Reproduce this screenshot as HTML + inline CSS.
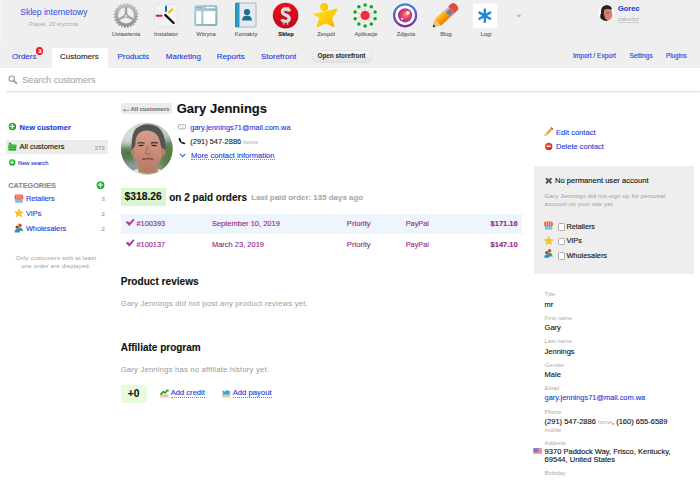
<!DOCTYPE html>
<html><head><meta charset="utf-8">
<style>
html,body{margin:0;padding:0;}
body{width:700px;height:487px;overflow:hidden;background:#fff;position:relative;font-family:"Liberation Sans",sans-serif;color:#000;}
.t{position:absolute;white-space:nowrap;line-height:1;-webkit-text-stroke:0.12px currentColor;}
.a{color:#2340dc;}
.g{color:#9a9a9a;}
.b{font-weight:bold;}
.abs{position:absolute;}
#hdr{position:absolute;left:0;top:0;width:700px;height:68px;background:#efefef;}
.il{position:absolute;top:30.5px;font-size:5.8px;color:#666;line-height:6px;white-space:nowrap;text-align:center;width:50px;-webkit-text-stroke:0.1px #666;}
</style></head><body>
<div id="hdr"></div>
<div class="abs" style="left:0;top:0;width:1px;height:43px;background:#f5f5f5;"></div>
<svg class="abs" style="left:0;top:0;" width="700" height="40" viewBox="0 0 700 40">
<defs>
<linearGradient id="ggear" x1="0" y1="0" x2="0" y2="1"><stop offset="0" stop-color="#c4c4c4"/><stop offset="1" stop-color="#8e8e8e"/></linearGradient>
<linearGradient id="gred" x1="0" y1="0" x2="0" y2="1"><stop offset="0" stop-color="#ec0e16"/><stop offset="1" stop-color="#bf0a1c"/></linearGradient>
<linearGradient id="gstar" x1="0" y1="0" x2="1" y2="1"><stop offset="0" stop-color="#ffe030"/><stop offset="0.6" stop-color="#ffc800"/><stop offset="1" stop-color="#ffa400"/></linearGradient>
<linearGradient id="gring" x1="0" y1="0" x2="0" y2="1"><stop offset="0" stop-color="#3a88e2"/><stop offset="1" stop-color="#7b2f90"/></linearGradient>
<radialGradient id="glens" cx="0.55" cy="0.45" r="0.6"><stop offset="0" stop-color="#ffa82a"/><stop offset="0.45" stop-color="#f03c78"/><stop offset="1" stop-color="#8a2c96"/></radialGradient>
<linearGradient id="gwit" x1="0" y1="0" x2="1" y2="1"><stop offset="0" stop-color="#b2d4de"/><stop offset="1" stop-color="#86aab6"/></linearGradient>
<linearGradient id="gspine" x1="0" y1="0" x2="1" y2="0"><stop offset="0" stop-color="#0c7aa6"/><stop offset="0.5" stop-color="#28a8d2"/><stop offset="1" stop-color="#1486b2"/></linearGradient>
<linearGradient id="gorange" x1="0" y1="0" x2="0" y2="1"><stop offset="0" stop-color="#ffc640"/><stop offset="0.5" stop-color="#ff9e00"/><stop offset="1" stop-color="#e87800"/></linearGradient>
<linearGradient id="gferr" x1="0" y1="0" x2="0" y2="1"><stop offset="0" stop-color="#d8d8d8"/><stop offset="0.5" stop-color="#707070"/><stop offset="1" stop-color="#9a9a9a"/></linearGradient>
</defs>
<!-- gear -->
<g transform="translate(126,15.4)">
<path fill="url(#ggear)" d="M11.00,0.00 L12.58,0.73 L12.48,1.71 L10.79,2.12 L10.63,2.85 L11.96,3.96 L11.62,4.88 L9.88,4.84 L9.53,5.50 L10.53,6.92 L9.96,7.72 L8.29,7.23 L7.78,7.78 L8.38,9.41 L7.62,10.04 L6.14,9.13 L5.50,9.53 L5.66,11.26 L4.76,11.67 L3.56,10.41 L2.85,10.63 L2.56,12.34 L1.58,12.50 L0.75,10.97 L0.00,11.00 L-0.73,12.58 L-1.71,12.48 L-2.12,10.79 L-2.85,10.63 L-3.96,11.96 L-4.88,11.62 L-4.84,9.88 L-5.50,9.53 L-6.92,10.53 L-7.72,9.96 L-7.23,8.29 L-7.78,7.78 L-9.41,8.38 L-10.04,7.62 L-9.13,6.14 L-9.53,5.50 L-11.26,5.66 L-11.67,4.76 L-10.41,3.56 L-10.63,2.85 L-12.34,2.56 L-12.50,1.58 L-10.97,0.75 L-11.00,0.00 L-12.58,-0.73 L-12.48,-1.71 L-10.79,-2.12 L-10.63,-2.85 L-11.96,-3.96 L-11.62,-4.88 L-9.88,-4.84 L-9.53,-5.50 L-10.53,-6.92 L-9.96,-7.72 L-8.29,-7.23 L-7.78,-7.78 L-8.38,-9.41 L-7.62,-10.04 L-6.14,-9.13 L-5.50,-9.53 L-5.66,-11.26 L-4.76,-11.67 L-3.56,-10.41 L-2.85,-10.63 L-2.56,-12.34 L-1.58,-12.50 L-0.75,-10.97 L-0.00,-11.00 L0.73,-12.58 L1.71,-12.48 L2.12,-10.79 L2.85,-10.63 L3.96,-11.96 L4.88,-11.62 L4.84,-9.88 L5.50,-9.53 L6.92,-10.53 L7.72,-9.96 L7.23,-8.29 L7.78,-7.78 L9.41,-8.38 L10.04,-7.62 L9.13,-6.14 L9.53,-5.50 L11.26,-5.66 L11.67,-4.76 L10.41,-3.56 L10.63,-2.85 L12.34,-2.56 L12.50,-1.58 L10.97,-0.75Z"/>
<circle r="8" fill="#efefef"/>
<g stroke="#a6a6a6" stroke-width="2.4" stroke-linecap="butt">
<line x1="0" y1="0" x2="0" y2="-8.5"/>
<line x1="0" y1="0" x2="7.6" y2="4.4"/>
<line x1="0" y1="0" x2="-7.6" y2="4.4"/>
</g>
<path d="M0,-4.2 L3.8,2.4 L-3.8,2.4Z" fill="#a6a6a6"/>
<circle cx="0" cy="0.6" r="1.1" fill="#efefef"/>
</g>
<!-- instalator -->
<rect x="154.5" y="4.3" width="22.8" height="22.6" rx="4" fill="#f3f3f3" stroke="#dedede" stroke-width="0.7"/>
<g stroke-linecap="round" stroke-width="2">
<line x1="166" y1="6.4" x2="166" y2="11" stroke="#2860c0"/>
<line x1="172.4" y1="9.3" x2="168.8" y2="12.5" stroke="#f5c000"/>
<line x1="156.6" y1="15.7" x2="161.6" y2="15.7" stroke="#e8141c"/>
<line x1="159" y1="9.9" x2="162.2" y2="12.7" stroke="#dcdcdc" stroke-width="2.4"/>
<line x1="159.3" y1="22.2" x2="162.5" y2="19.4" stroke="#dcdcdc" stroke-width="2.4"/>
<line x1="159" y1="9.7" x2="162.2" y2="12.5" stroke="#ffffff" stroke-width="1.6"/>
<line x1="159.3" y1="22" x2="162.5" y2="19.2" stroke="#ffffff" stroke-width="1.6"/>
<line x1="165.2" y1="14.9" x2="173.6" y2="23" stroke="#111" stroke-width="2.2"/>
</g>
<!-- witryna -->
<rect x="194.2" y="5" width="23.2" height="20.9" rx="2.2" fill="url(#gwit)"/>
<rect x="196.2" y="11.1" width="5.2" height="12.9" fill="#fff"/>
<rect x="203.3" y="11.1" width="12" height="12.9" fill="#fff"/>
<rect x="206" y="7.1" width="9" height="1.1" fill="#fff"/>
<g fill="#6e8c96"><rect x="196.2" y="7.2" width="1.4" height="1"/><rect x="198.3" y="7.2" width="1.4" height="1"/><rect x="200.4" y="7.2" width="1.4" height="1"/></g>
<!-- kontakty -->
<rect x="235.6" y="3" width="20.4" height="24" rx="1" fill="#e3ebef" stroke="#9aa6ae" stroke-width="0.8"/>
<rect x="235.2" y="2.8" width="4.2" height="24.4" fill="url(#gspine)"/>
<circle cx="247" cy="12" r="3.1" fill="#1e6d92"/>
<path d="M242,20.4 Q242.2,15.6 247,15.4 Q251.8,15.6 252,20.4Z" fill="#1e6d92"/>
<!-- sklep -->
<circle cx="285.6" cy="15.6" r="12.8" fill="url(#gred)"/>
<path d="M289.4,11.4 Q288.8,9 285.8,9 Q282.4,9.1 282.4,11.8 Q282.5,14.2 285.8,15.1 Q289.2,16 289.2,18.8 Q289,21.4 285.6,21.4 Q282.6,21.4 281.8,19.2" fill="none" stroke="#d8dcdc" stroke-width="3.3" stroke-linecap="butt"/>
<path d="M284,6.6 L286.2,8.2 L288.6,6.8 L289.2,8.6 L290.8,9.2 L289.8,11.4 L285.4,9.6Z" fill="#d8dcdc"/>
<circle cx="283.8" cy="23.8" r="0.85" fill="#d8dcdc"/>
<circle cx="287.6" cy="23.8" r="0.85" fill="#d8dcdc"/>
<!-- zespol -->
<circle cx="324.2" cy="7.1" r="4" fill="#ffcc00"/>
<path d="M313.6,13.8 Q320,12.6 326,11.2 Q332,9.4 336.8,8.4 Q338.2,8.6 337.4,10 L332,18.4 L334.6,26 Q334.6,27.4 333.2,27 L325.8,23.2 L317.8,27 Q316.2,27.4 316.6,26 L319.4,18 L313.4,14.6 Q313,14 313.6,13.8Z" fill="url(#gstar)"/>
<!-- aplikacje -->
<g fill="#0aa81a">
<circle cx="365.1" cy="4.9" r="1.75"/><circle cx="371.3" cy="6.8" r="1.75"/><circle cx="375.1" cy="12" r="1.75"/><circle cx="375.1" cy="18.8" r="1.75"/><circle cx="371.3" cy="24" r="1.75"/>
<circle cx="365.1" cy="26.1" r="1.75"/><circle cx="358.9" cy="24" r="1.75"/><circle cx="355.1" cy="18.8" r="1.75"/><circle cx="355.1" cy="12" r="1.75"/><circle cx="358.9" cy="6.8" r="1.75"/>
</g>
<g stroke="#ababab" stroke-width="0.7">
<line x1="365.1" y1="8.2" x2="365.1" y2="9.8"/><line x1="369.3" y1="9.6" x2="368.3" y2="10.9"/><line x1="371.9" y1="13.2" x2="370.4" y2="13.7"/><line x1="371.9" y1="17.6" x2="370.4" y2="17.1"/><line x1="369.3" y1="21.2" x2="368.3" y2="19.9"/>
<line x1="365.1" y1="22.6" x2="365.1" y2="21"/><line x1="360.9" y1="21.2" x2="361.9" y2="19.9"/><line x1="358.3" y1="17.6" x2="359.8" y2="17.1"/><line x1="358.3" y1="13.2" x2="359.8" y2="13.7"/><line x1="360.9" y1="9.6" x2="361.9" y2="10.9"/>
</g>
<circle cx="365.1" cy="15.4" r="4.6" fill="#ee3038"/>
<!-- zdjecia -->
<circle cx="405.1" cy="15.3" r="11" fill="#fff" stroke="url(#gring)" stroke-width="2.2"/>
<circle cx="405.1" cy="15.3" r="7.1" fill="url(#glens)"/>
<circle cx="407.9" cy="12.9" r="1.8" fill="#fff"/>
<circle cx="402" cy="18.8" r="0.95" fill="#fff"/>
<!-- blog pencil -->
<g transform="translate(444.8,16) rotate(-43)">
<path d="M-16.6,0 L-9.5,-4.6 L-9.5,4.6Z" fill="#e8c090"/>
<path d="M-16.6,0 L-14,-1.7 L-14,1.7Z" fill="#2a3440"/>
<rect x="-9.5" y="-4.6" width="12.5" height="9.2" fill="url(#gorange)"/>
<rect x="3" y="-4.6" width="6" height="9.2" fill="url(#gferr)"/>
<path d="M9,-4.6 L12.5,-4.6 Q16.2,-4.6 16.2,0 Q16.2,4.6 12.5,4.6 L9,4.6Z" fill="#e84840"/>
</g>
<!-- logi -->
<rect x="473" y="3.5" width="24" height="24.8" rx="2.5" fill="#fff"/>
<g stroke="#1d8ad8" stroke-width="2.4" stroke-linecap="butt">
<line x1="484.8" y1="8.6" x2="484.8" y2="22.8"/>
<line x1="478.6" y1="12.1" x2="491" y2="19.3"/>
<line x1="478.6" y1="19.3" x2="491" y2="12.1"/>
</g>
<!-- dropdown -->
<path d="M516.2,14.8 L521.4,14.8 L518.8,17.6Z" fill="#b8b8b8"/>
</svg>


<!-- header brand -->
<div class="t a" style="left:20.3px;top:7.8px;font-size:8.5px;color:#3656dc;-webkit-text-stroke:0.05px #3656dc;">Sklep internetowy</div>
<div class="t g" style="left:29px;top:22.4px;font-size:5.9px;color:#aaa;-webkit-text-stroke:0;">Piątek, 20 stycznia</div>

<!-- app labels -->
<div class="il" style="left:101px;">Ustawienia</div>
<div class="il" style="left:141px;">Instalator</div>
<div class="il" style="left:181px;">Witryna</div>
<div class="il" style="left:221px;">Kontakty</div>
<div class="il" style="left:261px;font-weight:bold;color:#222;-webkit-text-stroke:0.15px #222;">Sklep</div>
<div class="il" style="left:301px;">Zespół</div>
<div class="il" style="left:341px;">Aplikacje</div>
<div class="il" style="left:381px;">Zdjęcia</div>
<div class="il" style="left:421px;">Blog</div>
<div class="il" style="left:461px;">Logi</div>

<!-- user -->
<div class="t a b" style="left:618px;top:4.5px;font-size:7.4px;">Gorec</div>
<div class="t g" style="left:618px;top:16.8px;font-size:5.8px;color:#aaa;-webkit-text-stroke:0;text-decoration:underline;text-decoration-color:#ccc;">zakończ</div>

<!-- tabs -->
<div class="abs" style="left:52px;top:47.5px;width:56px;height:21px;background:#fff;"></div>
<div class="t a" style="left:12px;top:53px;font-size:8px;">Orders</div>
<div class="abs" style="left:36.4px;top:47px;width:6.9px;height:7.9px;border-radius:50%;background:#ee1018;"></div>
<div class="t b" style="left:36.4px;top:48.3px;width:6.9px;text-align:center;font-size:6px;color:#fff;">3</div>
<div class="t" style="left:60px;top:53px;font-size:8px;color:#222;">Customers</div>
<div class="t a" style="left:117.5px;top:53px;font-size:8px;">Products</div>
<div class="t a" style="left:165.8px;top:53px;font-size:8px;">Marketing</div>
<div class="t a" style="left:216.8px;top:53px;font-size:8px;">Reports</div>
<div class="t a" style="left:261px;top:53px;font-size:8px;">Storefront</div>
<div class="abs" style="left:311.5px;top:51px;width:60px;height:11px;border-radius:6px;background:linear-gradient(#f8f8f8,#e2e2e2);box-shadow:0 0 0 0.5px #d8d8d8,0 0.5px 1px rgba(0,0,0,0.08);"></div>
<div class="t b" style="left:317.5px;top:53.3px;font-size:6.35px;color:#333;-webkit-text-stroke:0.1px #333;">Open storefront</div>
<div class="t a" style="left:573px;top:53.2px;font-size:6.55px;">Import / Export</div>
<div class="t a" style="left:629.4px;top:53.2px;font-size:6.45px;">Settings</div>
<div class="t a" style="left:666px;top:53.2px;font-size:6.3px;">Plugins</div>

<!-- search -->
<div class="t" style="left:22.3px;top:75.9px;font-size:9.1px;color:#aaa;">Search customers</div>
<div class="abs" style="left:5.5px;top:91px;width:695px;height:1px;background:#e2e2e2;box-shadow:0 1px 2px rgba(0,0,0,0.05);"></div>

<!-- sidebar -->
<div class="t a b" style="left:19.6px;top:123.5px;font-size:7.5px;">New customer</div>
<div class="abs" style="left:6px;top:140px;width:101.6px;height:13.5px;background:#ececec;"></div>
<div class="t" style="left:19.6px;top:143px;font-size:7.47px;color:#111;">All customers</div>
<div class="t g" style="left:94.8px;top:144.5px;font-size:6px;">272</div>
<div class="t a" style="left:18px;top:160.8px;font-size:5.75px;">New search</div>
<div class="t b" style="left:8.2px;top:181.6px;font-size:7.3px;color:#8a8a8a;">CATEGORIES</div>
<div class="t a" style="left:25.9px;top:195px;font-size:7.3px;">Retailers</div>
<div class="t g" style="left:101.5px;top:195.8px;font-size:6px;">3</div>
<div class="t a" style="left:25.9px;top:210px;font-size:7.3px;">VIPs</div>
<div class="t g" style="left:101.5px;top:210.8px;font-size:6px;">2</div>
<div class="t a" style="left:25.9px;top:225px;font-size:7.35px;">Wholesalers</div>
<div class="t g" style="left:101.5px;top:225.8px;font-size:6px;">2</div>
<div class="t g" style="left:0;width:112px;text-align:center;top:253.5px;font-size:6px;letter-spacing:0.2px;line-height:8.6px;white-space:normal;color:#9c9c9c;-webkit-text-stroke:0;">Only customers with at least<br>one order are displayed.</div>

<!-- main header -->
<div class="abs" style="left:120.7px;top:103px;width:51.3px;height:11.4px;border-radius:2px;background:#ececec;"></div>
<div class="t b" style="left:130.5px;top:106.8px;font-size:5.9px;color:#777;">All customers</div>
<svg class="abs" style="left:122px;top:107px;" width="9" height="6" viewBox="0 0 9 6"><path d="M1.4,3.2 H7.2 M1.4,3.2 L3,2 M1.4,3.2 L3,4.4" stroke="#888" stroke-width="0.8" fill="none"/></svg>
<div class="t b" style="left:176.7px;top:101.5px;font-size:13px;color:#111;">Gary Jennings</div>
<div class="t a" style="left:190.3px;top:123.6px;font-size:7.4px;">gary.jennings71@mail.com.wa</div>
<div class="t" style="left:190.3px;top:137.6px;font-size:7.45px;color:#222;">(291) 547-2886 <span style="font-size:5.8px;letter-spacing:0.15px;color:#a8a8a8;-webkit-text-stroke:0;">home</span></div>
<div class="t a" style="left:191px;top:151.5px;font-size:7.6px;line-height:0.98;border-bottom:0.8px dotted #6a80e8;">More contact information</div>

<!-- orders -->
<div class="abs" style="left:120.7px;top:188px;width:45.7px;height:17.6px;background:#d9f7cf;"></div>
<div class="t b" style="left:124.6px;top:192.3px;font-size:10.3px;color:#111;">$318.26</div>
<div class="t b" style="left:169.2px;top:192.6px;font-size:10px;color:#111;">on 2 paid orders</div>
<div class="t b" style="left:251.3px;top:194px;font-size:7.93px;color:#ababab;">Last paid order: 135 days ago</div>
<div class="abs" style="left:120.7px;top:213.8px;width:401.7px;height:20.2px;background:#eef5fd;"></div>
<div class="t" style="left:136.5px;top:220px;font-size:7.35px;color:#99288e;">#100393</div>
<div class="t" style="left:211.9px;top:220px;font-size:7.5px;color:#99288e;">September 10, 2019</div>
<div class="t" style="left:346.8px;top:220px;font-size:7.7px;color:#99288e;">Priority</div>
<div class="t" style="left:405.7px;top:220px;font-size:7.36px;color:#99288e;">PayPal</div>
<div class="t b" style="left:490.6px;top:220px;font-size:7.5px;color:#99288e;">$171.16</div>
<div class="t" style="left:136.5px;top:240.5px;font-size:7.35px;color:#99288e;">#100137</div>
<div class="t" style="left:211.9px;top:240.5px;font-size:7.5px;color:#99288e;">March 23, 2019</div>
<div class="t" style="left:346.8px;top:240.5px;font-size:7.7px;color:#99288e;">Priority</div>
<div class="t" style="left:405.7px;top:240.5px;font-size:7.36px;color:#99288e;">PayPal</div>
<div class="t b" style="left:490.6px;top:240.5px;font-size:7.5px;color:#99288e;">$147.10</div>

<!-- reviews -->
<div class="t b" style="left:120.7px;top:277px;font-size:10.1px;color:#111;">Product reviews</div>
<div class="t g" style="left:120.7px;top:299.7px;font-size:7.7px;letter-spacing:0.21px;color:#9a9a9a;-webkit-text-stroke:0;">Gary Jennings did not post any product reviews yet.</div>
<div class="t b" style="left:120.7px;top:343px;font-size:10px;color:#111;">Affiliate program</div>
<div class="t g" style="left:120.7px;top:365.5px;font-size:7.7px;letter-spacing:0.185px;color:#9a9a9a;-webkit-text-stroke:0;">Gary Jennings has no affiliate history yet.</div>
<div class="abs" style="left:120.5px;top:385.1px;width:26.5px;height:17.7px;background:#e6fcdc;"></div>
<div class="t b" style="left:127.8px;top:389px;font-size:10.2px;color:#111;">+0</div>
<div class="t a" style="left:170.7px;top:390.2px;font-size:7.6px;line-height:0.9;border-bottom:0.8px dotted #6a80e8;">Add credit</div>
<div class="t a" style="left:232.7px;top:390.2px;font-size:7.7px;line-height:0.9;border-bottom:0.8px dotted #6a80e8;">Add payout</div>

<!-- right column -->
<div class="t a" style="left:556px;top:128.8px;font-size:7.57px;">Edit contact</div>
<div class="t a" style="left:556px;top:143.2px;font-size:7.5px;">Delete contact</div>
<div class="abs" style="left:533.6px;top:165.7px;width:160.8px;height:108px;background:#eeeeee;"></div>
<div class="t" style="left:555px;top:177.1px;font-size:7.58px;color:#111;">No permanent user account</div>
<div class="t g" style="left:544.6px;top:192px;font-size:6.1px;letter-spacing:0.15px;line-height:8.1px;color:#9c9c9c;-webkit-text-stroke:0;">Gary Jennings did not sign up for personal<br>account on your site yet.</div>
<div class="t" style="left:566.4px;top:222.6px;font-size:7.25px;color:#111;">Retailers</div>
<div class="t" style="left:566.4px;top:237.2px;font-size:7.3px;color:#111;">VIPs</div>
<div class="t" style="left:566.4px;top:251.7px;font-size:7.4px;color:#111;">Wholesalers</div>
<div class="abs" style="left:558.4px;top:223.3px;width:5px;height:5.4px;border:0.6px solid #b0b0b0;border-radius:1.2px;background:#fff;"></div>
<div class="abs" style="left:558.4px;top:237.9px;width:5px;height:5.4px;border:0.6px solid #b0b0b0;border-radius:1.2px;background:#fff;"></div>
<div class="abs" style="left:558.4px;top:252.4px;width:5px;height:5.4px;border:0.6px solid #b0b0b0;border-radius:1.2px;background:#fff;"></div>

<div class="t" style="left:544.6px;top:292.1px;font-size:5.8px;color:#aaa;-webkit-text-stroke:0;">Title</div>
<div class="t" style="left:544.6px;top:301px;font-size:7.5px;color:#111;">mr</div>
<div class="t" style="left:544.6px;top:316.1px;font-size:5.85px;color:#aaa;-webkit-text-stroke:0;">First name</div>
<div class="t" style="left:544.6px;top:324.2px;font-size:7.5px;color:#111;">Gary</div>
<div class="t" style="left:544.6px;top:339.3px;font-size:5.85px;color:#aaa;-webkit-text-stroke:0;">Last name</div>
<div class="t" style="left:544.6px;top:347.7px;font-size:7.5px;color:#111;">Jennings</div>
<div class="t" style="left:544.6px;top:362.9px;font-size:5.85px;color:#aaa;-webkit-text-stroke:0;">Gender</div>
<div class="t" style="left:544.6px;top:370.9px;font-size:7.5px;color:#111;">Male</div>
<div class="t" style="left:544.6px;top:386.3px;font-size:5.85px;color:#aaa;-webkit-text-stroke:0;">Email</div>
<div class="t a" style="left:544.6px;top:394.3px;font-size:7.43px;">gary.jennings71@mail.com.wa</div>
<div class="t" style="left:544.6px;top:409.8px;font-size:5.85px;color:#aaa;-webkit-text-stroke:0;">Phone</div>
<div class="t" style="left:544.6px;top:418px;font-size:7.5px;color:#111;">(291) 547-2886 <span style="font-size:5.6px;color:#aaa;font-style:italic;-webkit-text-stroke:0;">home</span>, (160) 655-6589</div>
<div class="t" style="left:544.6px;top:428px;font-size:5.6px;color:#aaa;font-style:italic;-webkit-text-stroke:0;">mobile</div>
<div class="t" style="left:544.6px;top:440.8px;font-size:5.85px;color:#aaa;-webkit-text-stroke:0;">Address</div>
<div class="t" style="left:544.6px;top:448.3px;font-size:7.54px;line-height:7.5px;color:#111;">9370 Paddock Way, Frisco, Kentucky,<br>69544, United States</div>
<div class="t" style="left:544.6px;top:471.3px;font-size:5.85px;color:#aaa;-webkit-text-stroke:0;">Birthday</div>

<svg class="abs" style="left:0;top:0;" width="700" height="487" viewBox="0 0 700 487">
<defs>
<filter id="blur1" x="-50%" y="-50%" width="200%" height="200%"><feGaussianBlur stdDeviation="3"/></filter>
<filter id="blur05" x="-20%" y="-20%" width="140%" height="140%"><feGaussianBlur stdDeviation="0.5"/></filter>
<linearGradient id="gface2" x1="0" y1="0" x2="0" y2="1"><stop offset="0" stop-color="#d6a08c"/><stop offset="0.5" stop-color="#c98c78"/><stop offset="1" stop-color="#b87a68"/></linearGradient>
<clipPath id="cpav"><circle cx="146.8" cy="148.8" r="25.9"/></clipPath>
<clipPath id="cpu"><circle cx="606.6" cy="13.1" r="8"/></clipPath>
<radialGradient id="gface" cx="0.5" cy="0.45" r="0.6"><stop offset="0" stop-color="#cf9c84"/><stop offset="1" stop-color="#a86e58"/></radialGradient>
<linearGradient id="gbg" x1="0" y1="0" x2="0" y2="1"><stop offset="0" stop-color="#d0d8da"/><stop offset="0.45" stop-color="#8aa890"/><stop offset="0.7" stop-color="#4f7a48"/><stop offset="1" stop-color="#7a9888"/></linearGradient>
<radialGradient id="ggreen" cx="0.4" cy="0.35" r="0.7"><stop offset="0" stop-color="#3cd04a"/><stop offset="1" stop-color="#0c9a1c"/></radialGradient>
<radialGradient id="gredc" cx="0.4" cy="0.35" r="0.7"><stop offset="0" stop-color="#ff6040"/><stop offset="1" stop-color="#d81c10"/></radialGradient>
</defs>
<!-- user avatar -->
<circle cx="606.6" cy="13.1" r="8" fill="#fff"/>
<g clip-path="url(#cpu)" filter="url(#blur05)">
<path d="M601,14 Q600,6 606,5 Q611,4.6 612,9 L610.6,10 Q607,8.6 604.6,10.4 L604,14Z" fill="#2c2222"/>
<path d="M604.2,9.8 Q608,8 611.4,10 Q613.2,14 612,17.6 Q610.6,20.4 607.4,20.6 Q604.2,20 603.6,16Z" fill="#d88070"/>
<path d="M600.4,14 L604,14 Q604.4,18.6 607.6,20.6 L609,22 L600,22Z" fill="#2a1e1e"/>
<path d="M606,13 L609.6,12.6" stroke="#6a3030" stroke-width="0.6"/>
</g>
<!-- search magnifier -->
<circle cx="11.7" cy="78.7" r="2.7" fill="none" stroke="#999" stroke-width="1.1"/>
<line x1="13.7" y1="80.7" x2="16.6" y2="83.3" stroke="#999" stroke-width="1.7" stroke-linecap="round"/>
<!-- new customer plus -->
<circle cx="12.45" cy="126.5" r="3.7" fill="url(#ggreen)"/>
<path d="M12.45,124.3 V128.7 M10.25,126.5 H14.65" stroke="#fff" stroke-width="1.2"/>
<!-- basket -->
<path d="M9.6,142.2 L12.8,144.8 L11.6,145.8 L8.8,143.4Z" fill="#606060"/>
<rect x="8" y="144.6" width="8.6" height="2.2" rx="0.4" fill="#3cc83c"/>
<rect x="8.4" y="146.6" width="7.8" height="4" fill="#20a820"/>
<rect x="8.4" y="148.2" width="7.8" height="0.7" fill="#7ae07a"/>
<!-- new search plus -->
<circle cx="12.2" cy="162.4" r="3.1" fill="url(#ggreen)"/>
<path d="M12.2,160.6 V164.2 M10.4,162.4 H14" stroke="#fff" stroke-width="1"/>
<!-- categories plus -->
<circle cx="100.5" cy="185.1" r="3.9" fill="url(#ggreen)"/>
<path d="M100.5,182.8 V187.4 M98.2,185.1 H102.8" stroke="#fff" stroke-width="1.2"/>
<!-- sidebar cat icons -->
<g id="shop1">
<rect x="15.2" y="198.4" width="7.4" height="4.4" fill="#9ab8c4"/>
<rect x="15.8" y="199.2" width="6.2" height="3" fill="#7cc4e0"/>
<path d="M14.6,199 V196.2 Q14.6,194.6 15.8,194.6 H22 Q23.2,194.6 23.2,196.2 V199 Q22.4,199.8 21.6,199 Q20.8,199.8 20,199 Q19.2,199.8 18.4,199 Q17.6,199.8 16.8,199 Q16,199.8 15.4,199 Q15,199.6 14.6,199Z" fill="#f2603e"/>
<path d="M16.8,194.8 V198.6 M18.9,194.8 V198.6 M21,194.8 V198.6" stroke="#ffe0d0" stroke-width="0.6"/>
</g>
<path d="M18.9,208.8 L20.1,211.8 L23.2,211.9 L20.8,213.9 L21.7,217 L18.9,215.2 L16.1,217 L17,213.9 L14.6,211.9 L17.7,211.8Z" fill="#f8c820" stroke="#e0a010" stroke-width="0.4"/>
<g>
<circle cx="20" cy="225.3" r="1.7" fill="#c0502a"/>
<path d="M17.4,231 Q17.6,227.4 20,227.4 Q22.6,227.4 22.8,231Z" fill="#2aa868"/>
<circle cx="17.2" cy="227.2" r="1.6" fill="#8a4a28"/>
<path d="M14.6,232.4 Q14.8,229 17.2,229 Q19.6,229 19.8,232.4Z" fill="#2a8ad8"/>
</g>
<!-- contact icons -->
<rect x="178.4" y="124.7" width="7.2" height="4.2" rx="0.8" fill="none" stroke="#a8a8a8" stroke-width="0.9"/>
<path d="M179.8,126 L182,127.4 L184.2,126" fill="none" stroke="#c0c0c0" stroke-width="0.6"/>
<path d="M179.2,137.8 Q178.2,138.6 178.9,140.4 Q180.6,143.6 183.8,144.2 Q185.2,144.4 185.4,143.4 L183.8,142 L182.8,142.6 Q181.2,141.6 180.6,140 L181.2,139.2 Z" fill="#111"/>
<path d="M179.9,153.9 L182.6,156.6 L185.3,153.9" fill="none" stroke="#3a62e0" stroke-width="1.1"/>
<!-- gary avatar -->
<g clip-path="url(#cpav)">
<rect x="120" y="122" width="54" height="54" fill="#8aa28a"/>
<g filter="url(#blur1)">
<rect x="118" y="120" width="30" height="26" fill="#d4dad6"/>
<rect x="150" y="120" width="26" height="22" fill="#c0ccc4"/>
<rect x="118" y="145" width="18" height="20" fill="#4e7a46"/>
<rect x="160" y="140" width="16" height="28" fill="#567e4a"/>
<rect x="118" y="162" width="20" height="16" fill="#8aa0a0"/>
</g>
<g filter="url(#blur05)">
<path d="M134,170 Q147,166 162,170 L166,178 L130,178Z" fill="#e6e8e8"/>
<path d="M140,160 L156,160 L158,172 Q147,176 138,172Z" fill="#b88068"/>
<path d="M131.5,149 Q131,134 136,128.6 Q146,121 158,127 Q166,133 165.6,150 L163,152 L132.8,152Z" fill="#535253"/>
<path d="M135.4,145 Q135,131.6 146,130.6 Q159.6,131 160.8,146 L162.6,150 Q163,156 160,161 Q157,170 147.6,171.4 Q139,170.6 135,160 Q132,156 132.6,150Z" fill="url(#gface2)"/>
<ellipse cx="133" cy="152.5" rx="2" ry="3.6" fill="#bb8069"/>
<ellipse cx="163.4" cy="152" rx="2" ry="3.6" fill="#bb8069"/>
<path d="M137.6,143.4 Q141,141.8 144.6,143.4" stroke="#5a3a30" stroke-width="1.4" fill="none"/>
<path d="M150.8,143.4 Q154.4,141.6 158,143.2" stroke="#5a3a30" stroke-width="1.4" fill="none"/>
<path d="M138.6,145.6 L143.4,145.4 M151.4,145.4 L156.6,145.6" stroke="#3a2420" stroke-width="1.3"/>
<path d="M147.6,146 Q147,151 145.4,153.4 Q147.8,155 150.8,153.6" stroke="#9a6250" stroke-width="0.9" fill="none"/>
<path d="M142,159.4 Q147.6,158 153.4,159.2" stroke="#7a4038" stroke-width="1.3" fill="none"/>
</g>
</g>
<!-- order checkmarks -->
<path d="M126,222.3 L128,221.3 L129.3,223.1 L133.2,219 L134.3,219.9 L129.3,225.8Z" fill="#a8389c" stroke="#a8389c" stroke-width="0.4" stroke-linejoin="round"/>
<path d="M126,242.9 L128,241.9 L129.3,243.7 L133.2,239.6 L134.3,240.5 L129.3,246.4Z" fill="#a8389c" stroke="#a8389c" stroke-width="0.4" stroke-linejoin="round"/>
<!-- add credit / payout icons -->
<path d="M160.4,394.2 L168.4,394.2 L168.8,397.6 L160.2,397.6Z" fill="#e8c8a8"/>
<path d="M160.4,394.6 L163.4,391.6 L165,393 L167.4,390.4" fill="none" stroke="#18a818" stroke-width="1.6"/>
<path d="M166,389.6 L168.6,389.4 L168.4,392Z" fill="#18a818"/>
<path d="M222,394 L230.2,394 L230.4,397.6 L222,397.6Z" fill="#e8c8a8"/>
<path d="M222.2,390.2 L225,391.4 L227,390 L230.4,391.6 L229.4,394.4 L223,394.4Z" fill="#2aaee8"/>
<!-- edit pencil -->
<g transform="translate(548.8,131.6) rotate(-45)">
<rect x="-3" y="-1.5" width="5.6" height="3" fill="#f7a81a"/>
<rect x="-3" y="-1.5" width="5.6" height="1" fill="#ffd060"/>
<path d="M-3,-1.5 L-5.8,0 L-3,1.5Z" fill="#e8c898"/>
<path d="M-5.8,0 L-4.8,-0.55 L-4.8,0.55Z" fill="#333"/>
<rect x="2.6" y="-1.5" width="1" height="3" fill="#aaa"/>
<rect x="3.6" y="-1.5" width="1.6" height="3" rx="0.6" fill="#e86050"/>
</g>
<!-- delete -->
<circle cx="548.7" cy="146.4" r="3.7" fill="url(#gredc)"/>
<rect x="546.6" y="145.8" width="4.2" height="1.2" fill="#fff"/>
<!-- no account x -->
<path d="M546,178.2 L551.4,183.2 M551.4,178.2 L546,183.2" stroke="#555" stroke-width="2"/>
<!-- right panel cat icons -->
<g transform="translate(529.6,26.8)">
<rect x="15.2" y="198.4" width="7.4" height="4.4" fill="#9ab8c4"/>
<rect x="15.8" y="199.2" width="6.2" height="3" fill="#7cc4e0"/>
<path d="M14.6,199 V196.2 Q14.6,194.6 15.8,194.6 H22 Q23.2,194.6 23.2,196.2 V199 Q22.4,199.8 21.6,199 Q20.8,199.8 20,199 Q19.2,199.8 18.4,199 Q17.6,199.8 16.8,199 Q16,199.8 15.4,199 Q15,199.6 14.6,199Z" fill="#f2603e"/>
<path d="M16.8,194.8 V198.6 M18.9,194.8 V198.6 M21,194.8 V198.6" stroke="#ffe0d0" stroke-width="0.6"/>
</g>
<path d="M548.7,236.6 L549.9,239.6 L553,239.7 L550.6,241.7 L551.5,244.8 L548.7,243 L545.9,244.8 L546.8,241.7 L544.4,239.7 L547.5,239.6Z" fill="#f8c820" stroke="#e0a010" stroke-width="0.4"/>
<g transform="translate(529.6,25.4)">
<circle cx="20" cy="225.3" r="1.7" fill="#c0502a"/>
<path d="M17.4,231 Q17.6,227.4 20,227.4 Q22.6,227.4 22.8,231Z" fill="#2aa868"/>
<circle cx="17.2" cy="227.2" r="1.6" fill="#8a4a28"/>
<path d="M14.6,232.4 Q14.8,229 17.2,229 Q19.6,229 19.8,232.4Z" fill="#2a8ad8"/>
</g>
<!-- flag -->
<rect x="533.4" y="448.2" width="8.6" height="5.6" fill="#f07070"/>
<path d="M533.4,449.6 H542 M533.4,451.4 H542 M533.4,453.2 H542" stroke="#f4d0d0" stroke-width="0.6"/>
<rect x="533.4" y="448.2" width="5" height="3.8" fill="#5a84e0"/>
</svg>

</body></html>
